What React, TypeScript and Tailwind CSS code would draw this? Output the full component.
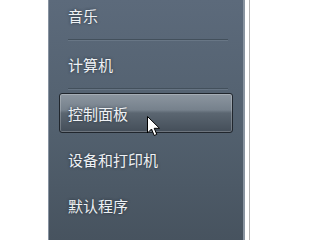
import React from 'react';

const items = [
    { label: '音乐', sep: true },
    { label: '计算机', sep: true },
    { label: '控制面板', active: true },
    { label: '设备和打印机' },
    { label: '默认程序' },
];

function Cursor() {
    return (
        <svg className="absolute left-[147px] top-[116px]" width="14" height="22" viewBox="0 0 14 22">
            <path
                d="M0.5 0.5 L0.5 17 L4.5 13 L7.2 19.5 L9.8 18.4 L7.2 12.3 L12.5 12.3 Z"
                fill="#ffffff"
                stroke="#000000"
                strokeWidth="1"
                strokeLinejoin="miter"
            />
        </svg>
    );
}

export default function App() {
    return (
        <main className="relative w-[300px] h-[240px] bg-white overflow-hidden flex font-['Noto_Sans_CJK_SC',sans-serif]">
            <div className="w-[48px] shrink-0" />
            {/* Start menu right pane */}
            <div className="w-[197px] h-full shrink-0 border-l border-l-[#8792a0] border-r-2 border-r-[#8a95a1] bg-[linear-gradient(to_bottom,#5c6a7b,#52606e_55%,#47535f)]">
                <div className="flex flex-col -mt-[5px]">
                    {items.map((item) => (
                        <React.Fragment key={item.label}>
                            <div
                                className={
                                    item.active
                                        ? 'mx-[10px] h-[40px] flex items-center px-[8px] rounded-[3px] border border-[#20262d] bg-[linear-gradient(to_bottom,#8c96a0_0%,#76818c_42%,#5b6671_50%,#444e59_100%)] shadow-[inset_0_0_0_1px_rgba(255,255,255,0.22)]'
                                        : 'mx-[10px] h-[40px] flex items-center px-[9px]'
                                }
                            >
                                <span className="text-[15px] leading-none text-[#eef1f4] [text-shadow:0_0_3px_rgba(20,28,38,0.7)]">
                                    {item.label}
                                </span>
                            </div>
                            {item.sep ? (
                                <div className="ml-[19px] mr-[15px] mt-[4px] mb-[4px] h-px bg-[#43505c] shadow-[0_1px_0_rgba(120,134,148,0.5)]" />
                            ) : (
                                <div className="h-[6px]" />
                            )}
                        </React.Fragment>
                    ))}
                </div>
            </div>
            <div className="w-[4px] shrink-0" />
            <div className="w-px h-full bg-[#b4b4b4]" />
            <Cursor />
        </main>
    );
}
